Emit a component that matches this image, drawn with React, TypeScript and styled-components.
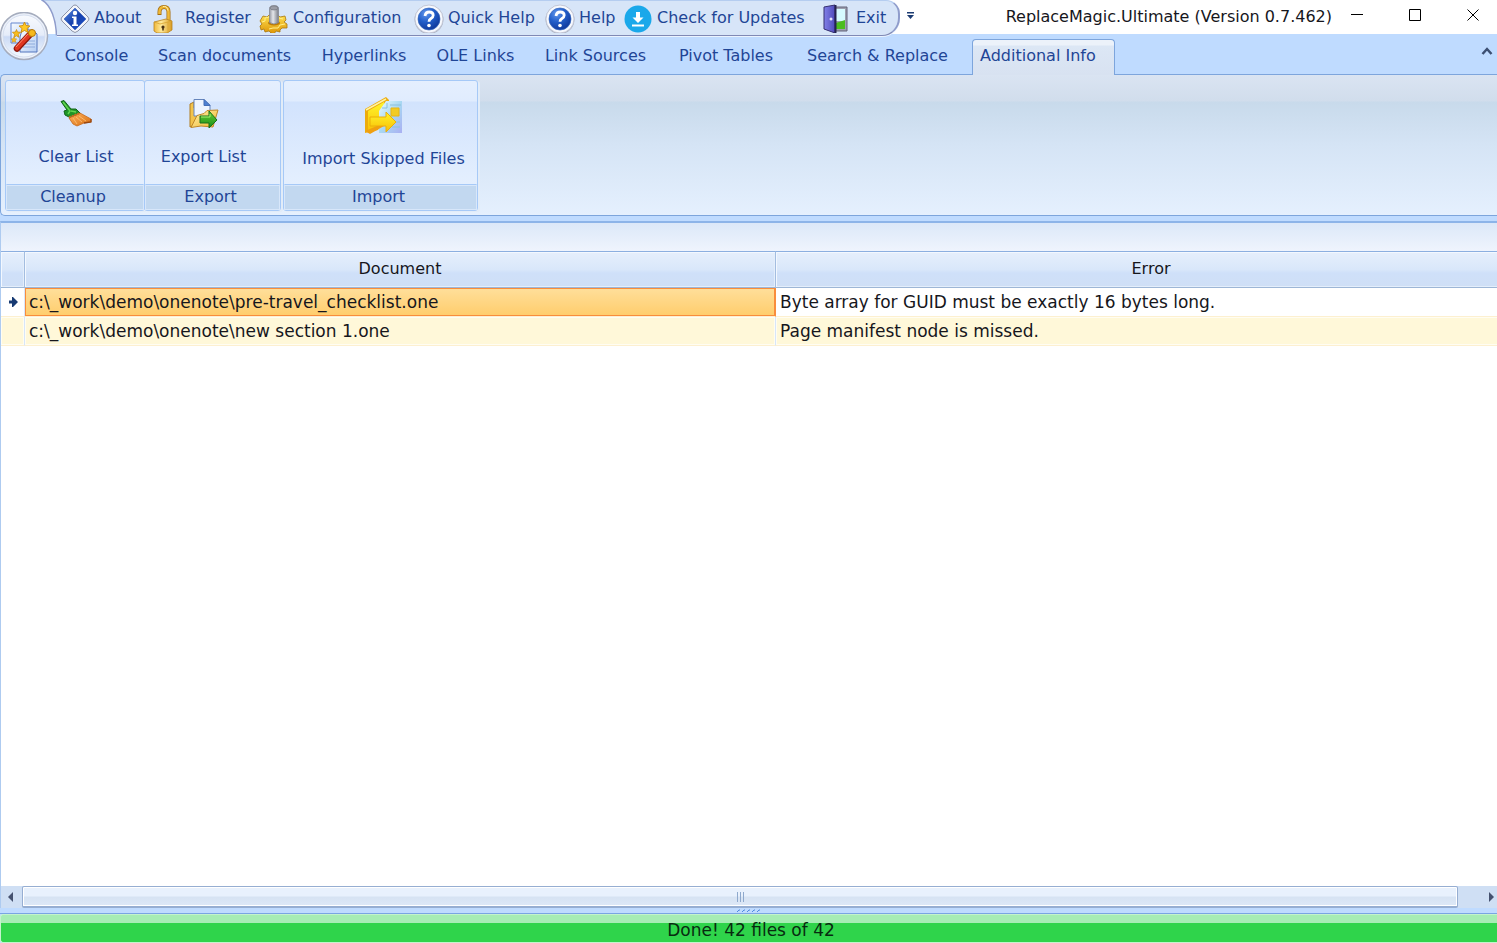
import React from "react";
import styled, { createGlobalStyle, css } from "styled-components";

const ink = "#1f4596";

const GlobalStyle = createGlobalStyle`
  * { box-sizing: border-box; }
  body {
    margin: 0;
    background: #fff;
    font-family: "DejaVu Sans", Verdana, sans-serif;
    font-size: 16px;
    line-height: 20px;
    color: #16161c;
    overflow: hidden;
  }
  button {
    font: inherit;
    color: inherit;
    background: none;
    border: 0;
    padding: 0;
    margin: 0;
  }
  svg { display: block; flex: none; }
`;

const Window = styled.div`
  display: flex;
  flex-direction: column;
  min-height: 100vh;
  background: #bfdbff;
`;

const Header = styled.header`
  position: relative;
`;

const TitleBar = styled.div`
  display: flex;
  align-items: flex-start;
  height: 34px;
  background: #fff;
`;

const OrbButton = styled.button`
  position: absolute;
  left: 0;
  top: 12px;
  z-index: 3;
`;

const QuickBar = styled.div`
  position: relative;
  z-index: 2;
  display: flex;
  align-items: flex-start;
  height: 37px;
  margin-left: 41px;
`;

const QuickItems = styled.nav`
  display: flex;
  height: 36px;
  padding-left: 3px;
  padding-right: 1px;
  background: #d7e5f8;
  border-top: 1px solid #b5cdf0;
  border-bottom: 1px solid #8089b5;
  border-right: 2px solid #8f9ccb;
  border-radius: 0 14px 18px 0;
  box-shadow: 0 1px 0 #eaf3ff;
`;

const QuickButton = styled.button<{ $width: number }>`
  display: flex;
  align-items: center;
  gap: 4px;
  min-width: ${(p) => p.$width}px;
  padding-bottom: 1px;
  color: ${ink};
  white-space: nowrap;
`;

const MoreButton = styled.button`
  padding: 12px 7px;
`;

const Title = styled.h1`
  flex: 1;
  margin: 0;
  padding: 7px 18px 0 0;
  font-size: 16px;
  line-height: 20px;
  font-weight: 400;
  text-align: right;
  white-space: nowrap;
`;

const WindowButtons = styled.div`
  display: flex;
  gap: 44px;
  padding: 7px 17px 0 0;
`;

const TabStrip = styled.div`
  display: flex;
  align-items: flex-end;
  height: 41px;
  padding-left: 51px;
`;

const Tab = styled.button<{ $width: number; $active?: boolean }>`
  position: relative;
  min-width: ${(p) => p.$width}px;
  height: 36px;
  color: ${ink};
  text-align: center;
  white-space: nowrap;
  padding-bottom: 2px;
  ${(p) =>
    p.$active &&
    css`
      z-index: 1;
      margin-left: 8px;
      padding-left: 7px;
      padding-bottom: 3px;
      text-align: left;
      border: 1px solid #7da5dc;
      border-bottom: 0;
      border-radius: 4px 4px 0 0;
      background: linear-gradient(#ecf2fa 0 5px, #dce7f5 6px, #d8e2f1);
    `}
`;

const CollapseButton = styled.button`
  margin-left: auto;
  align-self: flex-start;
  padding: 12px 4px;
`;

const Ribbon = styled.section`
  display: flex;
  align-items: flex-start;
  height: 142px;
  margin-top: -1px;
  padding: 5px 4px;
  border: 1px solid #7da5dc;
  border-width: 1px 0 1px 1px;
  border-radius: 5px 0 0 5px;
  background: linear-gradient(#dae4f2, #d1ddec 26px, #c8daeb 27px, #d5e4f5 70px, #e5f0fe);
`;

const Group = styled.div<{ $width: number; $gap?: number }>`
  display: flex;
  flex-direction: column;
  width: ${(p) => p.$width}px;
  height: 131px;
  margin-left: ${(p) => p.$gap ?? 0}px;
  border: 1px solid #a6c9f7;
  border-radius: 3px;
  background: linear-gradient(#e5effe, #e0ecfe 20px, #d2e3fd 21px, #e4effe 103px);
  box-shadow: 2px 1px 0 #e2ecf8;
`;

const GroupButton = styled.button`
  display: flex;
  flex-direction: column;
  align-items: center;
  flex: 1;
  color: ${ink};
  white-space: nowrap;
`;

const ClearButton = styled(GroupButton)`
  gap: 16px;
  padding: 18px 0 0 2px;
`;

const ExportButton = styled(GroupButton)`
  gap: 16px;
  padding: 18px 18px 0 0;
`;

const ImportButton = styled(GroupButton)`
  gap: 12px;
  padding: 16px 0 0 6px;
`;

const Caption = styled.div`
  height: 26px;
  margin-top: auto;
  padding-top: 2px;
  padding-right: 4px;
  border: 1px solid #d8e7fa;
  border-top: 1px solid #a6c9f7;
  box-shadow: inset 0 1px 0 #d8e7fa;
  background: #c2d8f0;
  color: ${ink};
  text-align: center;
`;

const Panel = styled.main`
  display: flex;
  flex-direction: column;
  flex: 1;
  margin-top: 5px;
  border-top: 2px solid #8db4e8;
  border-left: 1px solid #aecbf0;
  background: #fff;
`;

const GroupBar = styled.div`
  height: 28px;
  background: linear-gradient(#dce8f8, #eff4fd);
`;

const TableArea = styled.div`
  flex: 1;
  overflow: hidden;
`;

const Table = styled.table`
  width: calc(100% + 30px);
  table-layout: fixed;
  border-collapse: separate;
  border-spacing: 0;
  font-size: 16px;
`;

const MarkerCol = styled.col`
  width: 24px;
`;

const HeadCell = styled.th`
  height: 37px;
  padding: 0 0 1px;
  font-weight: 400;
  border-top: 1px solid #8cafe0;
  border-right: 1px solid #a3bde0;
  border-bottom: 1px solid #9db6d6;
  background: linear-gradient(#e6effc, #d9e7fa 50%, #cfe0f9 60%, #cfdff6);
  box-shadow: inset 1px 1px 0 #f3f8ff, inset -1px -1px 0 #e4eefb;
`;

const Cell = styled.td<{ $alt?: boolean; $selected?: boolean }>`
  height: 29px;
  padding: 0 4px 1px;
  white-space: nowrap;
  font-size: 17px;
  border-right: 1px solid #d8e6f8;
  border-bottom: 1px solid #fdf0d0;
  background: ${(p) => (p.$alt ? "#fff8d9" : "#fff")};
  box-shadow: inset 0 0 0 1px ${(p) => (p.$alt ? "#fffdf2" : "#fff")};
  ${(p) =>
    p.$selected &&
    css`
      border-color: #f98d3c;
      border-bottom-color: #fdf0d0;
      background: linear-gradient(#ffdf9b, #ffcd6c);
      box-shadow: inset 1px 1px 0 #f98d3c, inset -1px -1px 0 #f98d3c;
    `}
`;

const MarkerCell = styled(Cell)`
  padding: 0 0 1px 7px;
`;

const ScrollBar = styled.div`
  display: flex;
  height: 22px;
  background: #cfdff4;
`;

const ScrollButton = styled.button<{ $width: number }>`
  display: flex;
  align-items: center;
  justify-content: flex-end;
  width: ${(p) => p.$width}px;
`;

const Thumb = styled.div`
  display: flex;
  align-items: center;
  justify-content: center;
  flex: 1;
  border: 1px solid #96aed2;
  border-bottom-width: 2px;
  border-radius: 2px;
  box-shadow: inset 0 0 0 1px #fff;
  background: linear-gradient(#e8f1fd 0 9px, #d6e3f3 10px, #dde8f7);
`;

const Splitter = styled.div`
  display: flex;
  justify-content: center;
  height: 6px;
  border-bottom: 1px solid #79a5e3;
  background: #bfdbff;
`;

const StatusBar = styled.footer`
  height: 29px;
  padding: 6px 0 0 4px;
  border: 1px solid #c4f3cd;
  border-right: 0;
  border-radius: 3px 0 0 3px;
  font-size: 17px;
  line-height: 18px;
  text-align: center;
  color: #082b10;
  background: linear-gradient(#a6edb4 0 8px, #2fd44b 8px);
`;

const Icon = ({ size = 30, w, h, children }: { size?: number; w?: number; h?: number; children: React.ReactNode }) => (
  <svg width={w ?? size} height={h ?? size} viewBox={`0 0 ${w ?? size} ${h ?? size}`} aria-hidden="true">
    {children}
  </svg>
);

const OrbIcon = () => (
  <Icon size={49}>
    <defs>
      <linearGradient id="orb" x1="0" y1="0" x2="0" y2="1">
        <stop offset="0" stopColor="#f8fafe" />
        <stop offset=".48" stopColor="#e5ecf9" />
        <stop offset=".52" stopColor="#cbdaf5" />
        <stop offset="1" stopColor="#f3f9ff" />
      </linearGradient>
      <linearGradient id="page" x1="0" y1="0" x2="1" y2="1">
        <stop offset="0" stopColor="#f7fbff" />
        <stop offset="1" stopColor="#b4cdf3" />
      </linearGradient>
    </defs>
    <circle cx="24" cy="24" r="23.5" fill="#edf2fb" stroke="#a5acbd" strokeWidth="1.5" />
    <circle cx="24" cy="24" r="21" fill="url(#orb)" stroke="#d5deef" />
    <path d="M11 11h17v20H11z" fill="url(#page)" stroke="#6587ce" />
    <path d="M22 18h11l4 4v18H20V25z" fill="url(#page)" stroke="#5577bd" />
    <path d="M27 29h8M25 32h10M23 35h12" stroke="#8eabdc" />
    <path d="M17 36.500l13-14" stroke="#8c170c" strokeWidth="6.500" strokeLinecap="round" />
    <path d="M17 36l13-14" stroke="#e03620" strokeWidth="4.500" strokeLinecap="round" />
    <path d="M16 35l12-13" stroke="#ff8a6c" strokeWidth="1" />
    <circle cx="32" cy="21" r="3.500" fill="#f6b91c" stroke="#b57609" />
    <path d="M24.500 10l1.500 3.500 4 .5-3 2.500 1 4-3.500-2-3.500 2 1-4-3-2.500 4-.5z" fill="#ffc823" stroke="#c98705" strokeWidth=".8" />
    <path d="M16.500 17.500l1 2.500 3 .3-2.300 2 .7 3-2.400-1.500-2.600 1.500.7-3-2.200-2 3-.3z" fill="#f9bd1c" stroke="#c98705" strokeWidth=".7" />
    <path d="M14 25l.8 1.700 1.900.3-1.400 1.300.3 2-1.600-1-1.700 1 .3-2-1.400-1.300 2-.3z" fill="#f9bd1c" stroke="#c98705" strokeWidth=".5" />
  </Icon>
);

const AboutIcon = () => (
  <Icon>
    <defs>
      <linearGradient id="info" x1="0" y1="0" x2="1" y2="1">
        <stop offset="0" stopColor="#5c91e6" />
        <stop offset=".5" stopColor="#1742ae" />
        <stop offset="1" stopColor="#1d50c8" />
      </linearGradient>
    </defs>
    <path d="M15 2Q17 2 18 4L28 14Q30 16 28 18L18 28Q15 31 12 28L2 18Q0 16 2 14L12 4Q13 2 15 2z" fill="#f3f5fa" stroke="#8d94a8" />
    <path d="M15 5L26 16 15 27 4 16z" fill="url(#info)" stroke="#4a70c4" strokeWidth=".8" />
    <circle cx="15" cy="10" r="2.200" fill="#fff" />
    <path d="M12 13.500h4.500v8H18v1.500h-6v-1.500h1.500V15H12z" fill="#fff" />
  </Icon>
);

const LockIcon = () => (
  <Icon>
    <defs>
      <linearGradient id="gold" x1="0" y1="0" x2="1" y2="0">
        <stop offset="0" stopColor="#f0b93a" />
        <stop offset=".4" stopColor="#ffe99a" />
        <stop offset="1" stopColor="#d99b20" />
      </linearGradient>
    </defs>
    <path d="M8.500 12V9q0-5 4.500-5t4.500 5v9" fill="none" stroke="#a66e0e" strokeWidth="4" />
    <path d="M8.500 11V9q0-5 4.500-5t4.500 5v9" fill="none" stroke="#eeb838" strokeWidth="2.600" />
    <path d="M12 3.500q4-1 5 4" fill="none" stroke="#ffefa9" />
    <path d="M3 19l12-3 6 2v9l-5 3H6l-3-2z" fill="url(#gold)" stroke="#b98320" strokeWidth=".8" />
    <path d="M3 19l6 2 12-3M17 30V19" fill="none" stroke="#d9a431" strokeWidth=".8" />
    <circle cx="12" cy="24" r="1.600" fill="#493013" />
    <path d="M12 24v3.500" stroke="#493013" strokeWidth="1.500" />
  </Icon>
);

const ConfigIcon = () => (
  <Icon>
    <defs>
      <linearGradient id="pin" x1="0" y1="0" x2="1" y2="0">
        <stop offset="0" stopColor="#9699a3" />
        <stop offset=".4" stopColor="#e4e6ea" />
        <stop offset="1" stopColor="#777b85" />
      </linearGradient>
      <linearGradient id="cog" x1="0" y1="0" x2="0" y2="1">
        <stop offset="0" stopColor="#ffe050" />
        <stop offset="1" stopColor="#dc9305" />
      </linearGradient>
    </defs>
    <path d="M4 13l4 1 2-2h9l2 2 5-1 1 4-2 2 3 2v4l-5 0-2 2 0 2-4-1-2 3-3-1-2-2-4 1-1-3-3 1-1-4 2-2-2-3z" fill="url(#cog)" stroke="#a8770f" strokeWidth=".8" />
    <path d="M3 19l3-1 0-3 4-1M20 15l4 1M26 21l-5 1-2 3-5 0-4 1" stroke="#fff08a" fill="none" />
    <ellipse cx="15" cy="20" rx="6" ry="2.500" fill="#bb7c07" />
    <path d="M10.500 5.500q0-3 4.500-3t4.500 3v14q-4.500 3-9 0z" fill="url(#pin)" stroke="#858995" strokeWidth=".8" />
    <ellipse cx="15" cy="5" rx="4" ry="2" fill="#9b9da6" stroke="#747780" strokeWidth=".7" />
  </Icon>
);

const HelpIcon = () => (
  <Icon>
    <defs>
      <radialGradient id="help" cx=".35" cy=".25" r=".75">
        <stop offset="0" stopColor="#6397eb" />
        <stop offset=".5" stopColor="#235fca" />
        <stop offset="1" stopColor="#113b9e" />
      </radialGradient>
    </defs>
    <circle cx="15" cy="16.500" r="14.500" fill="#aeb3c3" />
    <circle cx="15" cy="16" r="14" fill="#f7f9fe" stroke="#babfcf" strokeWidth=".8" />
    <circle cx="15" cy="16" r="11" fill="url(#help)" stroke="#3567bd" strokeWidth=".7" />
    <path d="M11 13q.5-4 4.200-4 4 0 4 3.300 0 2-2.500 3.500-1.700 1-1.700 3" fill="none" stroke="#fff" strokeWidth="2.800" />
    <circle cx="15" cy="22.500" r="1.800" fill="#fff" />
  </Icon>
);

const UpdateIcon = () => (
  <Icon>
    <circle cx="15" cy="16" r="13.500" fill="#1aa8ea" />
    <path d="M15 9v7" stroke="#fff" strokeWidth="4" />
    <path d="M9.500 14.500h11L15 20z" fill="#fff" />
    <path d="M9 22.500h12" stroke="#fff" strokeWidth="2" />
  </Icon>
);

const ExitIcon = () => (
  <Icon>
    <defs>
      <linearGradient id="door" x1="0" y1="0" x2="1" y2="0">
        <stop offset="0" stopColor="#8180e8" />
        <stop offset="1" stopColor="#4f4bbb" />
      </linearGradient>
    </defs>
    <path d="M13 4h12v24H13z" fill="#9d9faf" stroke="#636378" />
    <path d="M14 6h9v12h-9z" fill="#d6fbff" />
    <path d="M14 20l9-3v9h-9z" fill="#4bbd1e" />
    <path d="M2 4l11-2v28L2 26z" fill="url(#door)" stroke="#353071" />
    <path d="M13.500 2v28" stroke="#25224f" strokeWidth="2" />
    <circle cx="9" cy="16" r="1.500" fill="#e4e4fc" />
  </Icon>
);

const BrushIcon = () => (
  <Icon w={32} h={32}>
    <defs>
      <linearGradient id="bristle" x1="0" y1="0" x2="1" y2="1">
        <stop offset="0" stopColor="#ffb35d" />
        <stop offset="1" stopColor="#d66c10" />
      </linearGradient>
    </defs>
    <path d="M1 2.500l3-1 7 8.500 5 0 5 5-10 4-6-3-1-4 3-1z" fill="#1f9427" stroke="#126619" />
    <path d="M3 3l7 9-2 3M11 12l5 1" fill="none" stroke="#62d551" strokeWidth="1.500" />
    <path d="M9 19l11-5 11 6v3l-7 1-7 3-4-2z" fill="url(#bristle)" stroke="#c7681c" strokeWidth=".8" />
    <path d="M13 19l4 6M16 18l6 5M19 17l7 5" stroke="#ffc27b" strokeWidth=".8" />
    <path d="M24 24l7-1 0-3" fill="none" stroke="#984711" strokeWidth="1.300" />
    <path d="M9 18.500l11-4.500" stroke="#c96a23" strokeWidth="2" strokeDasharray="2 1" />
  </Icon>
);

const ExportIcon = () => (
  <Icon w={32} h={32}>
    <defs>
      <linearGradient id="folder" x1="0" y1="0" x2="1" y2="1">
        <stop offset="0" stopColor="#fff3b0" />
        <stop offset="1" stopColor="#f1b62b" />
      </linearGradient>
      <linearGradient id="go" x1="0" y1="0" x2="0" y2="1">
        <stop offset="0" stopColor="#6ad136" />
        <stop offset="1" stopColor="#158c17" />
      </linearGradient>
    </defs>
    <path d="M2 5l4-2v6h15v5L8 25l-6 3z" fill="#f3c34b" stroke="#b07c20" />
    <path d="M6 .5h10l6 5.500v11H6z" fill="#edf4ff" stroke="#6685bb" />
    <path d="M16 .5v6h6z" fill="#4d80d3" stroke="#456eb7" />
    <path d="M3 28.500l6-12 7-2 3-3 11-.5-5 17-12-1z" fill="url(#folder)" stroke="#bf8728" />
    <path d="M12 17h9v-5l8 9-8 8v-5h-9z" fill="url(#go)" stroke="#18711c" />
    <path d="M13 18h9v-3" fill="none" stroke="#a3ed72" />
  </Icon>
);

const ImportIcon = () => (
  <Icon w={40} h={40}>
    <defs>
      <linearGradient id="sheet" x1="0" y1="0" x2="1" y2="1">
        <stop offset="0" stopColor="#eafaff" />
        <stop offset=".5" stopColor="#a8d8f2" />
        <stop offset="1" stopColor="#a9aff2" />
      </linearGradient>
      <linearGradient id="yellow" x1="0" y1="0" x2="0" y2="1">
        <stop offset="0" stopColor="#fff52b" />
        <stop offset="1" stopColor="#f8bd04" />
      </linearGradient>
    </defs>
    <path d="M1 12L22 0l3 3v8L14 33 1 36z" fill="#edac0c" />
    <path d="M4 14l16-9v24L4 36z" fill="url(#yellow)" />
    <path d="M2 13L22 2" stroke="#fff3a0" strokeWidth="1.500" />
    <path d="M15 14l7-10h16v32H15z" fill="url(#sheet)" />
    <path d="M18 11h5V6M26 8h11M30 25h6M28 30h8" stroke="#8cc0da" fill="none" />
    <path d="M27 11h8v8h-8z" fill="#f2cb22" stroke="#e8b513" />
    <path d="M6 20h16v-5l10 10-10 10v-6H6z" fill="url(#yellow)" stroke="#ecae08" />
    <path d="M1 34l12-5h7L6 37z" fill="#f0a010" />
  </Icon>
);

const quickItems = [
  { label: "About", width: 91, icon: <AboutIcon /> },
  { label: "Register", width: 108, icon: <LockIcon /> },
  { label: "Configuration", width: 155, icon: <ConfigIcon /> },
  { label: "Quick Help", width: 131, icon: <HelpIcon /> },
  { label: "Help", width: 78, icon: <HelpIcon /> },
  { label: "Check for Updates", width: 199, icon: <UpdateIcon /> },
  { label: "Exit", width: 75, icon: <ExitIcon /> },
];

const tabs = [
  { label: "Console", width: 91 },
  { label: "Scan documents", width: 165 },
  { label: "Hyperlinks", width: 114 },
  { label: "OLE Links", width: 109 },
  { label: "Link Sources", width: 131 },
  { label: "Pivot Tables", width: 130 },
  { label: "Search & Replace", width: 173 },
  { label: "Additional Info", width: 143 },
];

const rows = [
  ["c:\\_work\\demo\\onenote\\pre-travel_checklist.one", "Byte array for GUID must be exactly 16 bytes long."],
  ["c:\\_work\\demo\\onenote\\new section 1.one", "Page manifest node is missed."],
];

export default function App() {
  return (
    <Window>
      <GlobalStyle />
      <Header>
        <OrbButton aria-label="Application menu">
          <OrbIcon />
        </OrbButton>
        <TitleBar>
          <QuickBar>
            <svg width="16" height="37" viewBox="0 0 16 37" aria-hidden="true">
              <path d="M0 0H16V36H15C15 22 10 4 0 0z" fill="#d7e5f8" />
              <path d="M0 .5H16" stroke="#b5cdf0" />
              <path d="M1 0C10 5 15 20 15.500 35.500" fill="none" stroke="#8f9ccb" strokeWidth="1.500" />
            </svg>
            <QuickItems>
              {quickItems.map((item) => (
                <QuickButton key={item.label} $width={item.width}>
                  {item.icon}
                  {item.label}
                </QuickButton>
              ))}
            </QuickItems>
            <MoreButton aria-label="Customize toolbar">
              <Icon w={8} h={8}>
                <path d="M0 0h7v1.500H0zM0 3h7L3.500 7z" fill="#1c3b72" />
              </Icon>
            </MoreButton>
          </QuickBar>
          <Title>ReplaceMagic.Ultimate (Version 0.7.462)</Title>
          <WindowButtons>
            <button aria-label="Minimize">
              <Icon w={14} h={16}>
                <path d="M1 7.500h12" stroke="#000" />
              </Icon>
            </button>
            <button aria-label="Maximize">
              <Icon w={14} h={16}>
                <path d="M1.500 2.500h11v11h-11z" fill="none" stroke="#000" />
              </Icon>
            </button>
            <button aria-label="Close">
              <Icon w={14} h={16}>
                <path d="M1.500 2.500l11 11M12.500 2.500l-11 11" stroke="#000" />
              </Icon>
            </button>
          </WindowButtons>
        </TitleBar>
        <TabStrip role="tablist">
          {tabs.map((tab) => {
            const active = tab.label === "Additional Info";
            return (
              <Tab key={tab.label} role="tab" aria-selected={active} $width={tab.width} $active={active}>
                {tab.label}
              </Tab>
            );
          })}
          <CollapseButton aria-label="Collapse ribbon">
            <Icon w={12} h={10}>
              <path d="M1.500 8L6 3l4.500 5" fill="none" stroke="#3c4f72" strokeWidth="2.500" />
            </Icon>
          </CollapseButton>
        </TabStrip>
      </Header>

      <Ribbon>
        <Group $width={140}>
          <ClearButton>
            <BrushIcon />
            Clear List
          </ClearButton>
          <Caption>Cleanup</Caption>
        </Group>
        <Group $width={137} $gap={-1}>
          <ExportButton>
            <ExportIcon />
            Export List
          </ExportButton>
          <Caption>Export</Caption>
        </Group>
        <Group $width={195} $gap={2}>
          <ImportButton>
            <ImportIcon />
            Import Skipped Files
          </ImportButton>
          <Caption>Import</Caption>
        </Group>
      </Ribbon>

      <Panel>
        <GroupBar />
        <TableArea>
          <Table>
            <colgroup>
              <MarkerCol />
              <col />
              <col />
            </colgroup>
            <thead>
              <tr>
                <HeadCell aria-label="Current row" />
                <HeadCell>Document</HeadCell>
                <HeadCell>Error</HeadCell>
              </tr>
            </thead>
            <tbody>
              {rows.map(([path, error], i) => (
                <tr key={path}>
                  <MarkerCell $alt={i === 1}>
                    {i === 0 && (
                      <Icon w={10} h={12}>
                        <path d="M1 4.500h3V1h1l5 5-5 5H4V7.500H1z" fill="#173a72" />
                      </Icon>
                    )}
                  </MarkerCell>
                  <Cell $alt={i === 1} $selected={i === 0}>
                    {path}
                  </Cell>
                  <Cell $alt={i === 1}>{error}</Cell>
                </tr>
              ))}
            </tbody>
          </Table>
        </TableArea>
        <ScrollBar>
          <ScrollButton $width={21} aria-label="Scroll left">
            <Icon w={15} h={10}>
              <path d="M6 0v10L1 5z" fill="#44516f" />
            </Icon>
          </ScrollButton>
          <Thumb>
            <Icon w={8} h={10}>
              <path d="M1.500 0v10M4.500 0v10M7.500 0v10" stroke="#8ea9cd" />
            </Icon>
          </Thumb>
          <ScrollButton $width={39} aria-label="Scroll right">
            <Icon w={9} h={10}>
              <path d="M1 0v10l5-5z" fill="#44516f" />
            </Icon>
          </ScrollButton>
        </ScrollBar>
      </Panel>
      <Splitter>
        <Icon w={24} h={5}>
          <path d="M0 4l2-2h1M5 4l2-2h1M10 4l2-2h1M15 4l2-2h1M20 4l2-2h1" fill="none" stroke="#4f8ae0" />
        </Icon>
      </Splitter>
      <StatusBar>Done! 42 files of 42</StatusBar>
    </Window>
  );
}
